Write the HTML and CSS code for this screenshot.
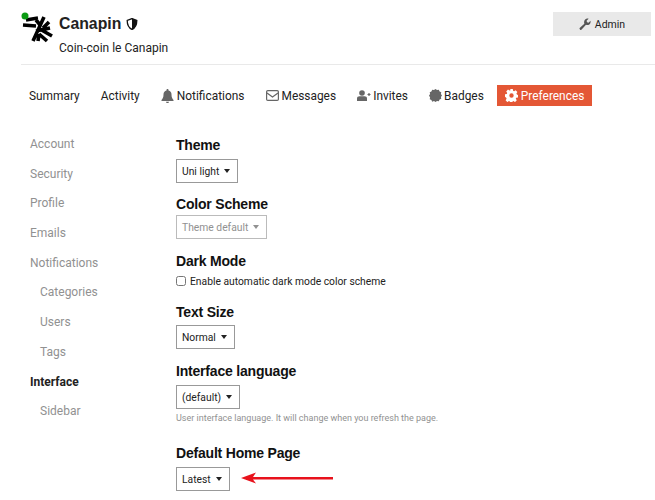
FILE: index.html
```html
<!DOCTYPE html>
<html lang="en">
<head>
<meta charset="utf-8">
<title>Canapin - Preferences</title>
<link rel="stylesheet" href="styles.css">
</head>
<body>
<div class="page">
  <header class="head">
    <div class="avatar">
      <svg width="34" height="34" viewBox="0 0 34 34"><g fill="none" stroke="#000" stroke-width="3.600"><path d="M5 7l12-2M2 12l13 1M23 4L12 28M15 7l5 6M15 18l14-3M17 15l14 8M18 21l8 7M18 21l-1 7M28 9l-6 6"/></g><circle cx="4" cy="3" r="3.500" fill="#0a9a12"/></svg>
    </div>
    <div class="identity">
      <h1 class="name">Canapin <svg class="shield" width="12" height="12" viewBox="0 0 12 13"><path d="M6 .6l5.2 2c0 4.600-1.600 8-5.200 9.800C2.400 10.600.8 7.200.8 2.600z" fill="none" stroke="#111" stroke-width="1.400"/><path d="M6 .6l5.200 2c0 4.600-1.600 8-5.200 9.800z" fill="#111"/></svg></h1>
      <p class="tagline">Coin-coin le Canapin</p>
    </div>
    <div class="admin"><svg width="12" height="12" viewBox="0 0 13 13"><path d="M1 12.200l-.6-1 5.400-5C5 4 5.800 1.500 8 .8c1-.3 1.800-.2 2.400 0L8.200 3l.5 1.600 1.600.5 2.200-2.200c.4 2.200-.6 4-2.400 4.600-1 .3-1.800.2-2.500-.1l-5 5.200c-.4.300-1.200.400-1.600.2z" fill="#555"/></svg>Admin</div>
  </header>
  <nav class="tabs">
    <a class="tab">Summary</a>
    <a class="tab">Activity</a>
    <a class="tab"><svg width="13" height="14" viewBox="0 0 13 14"><path d="M6.500 0c.6 0 1 .4 1 1v.5c2 .4 3 2 3 4 0 3 .8 4 2 5.500v1H.5v-1c1.200-1.500 2-2.500 2-5.500 0-2 1-3.600 3-4V1c0-.6.400-1 1-1zM5 12.800h3c0 .8-.6 1.200-1.500 1.200S5 13.600 5 12.800z" fill="#666"/></svg>Notifications</a>
    <a class="tab"><svg width="13" height="11" viewBox="0 0 13 11"><rect x=".6" y=".6" width="11.800" height="9.800" rx="1.200" fill="none" stroke="#666" stroke-width="1.200"/><path d="M1 3l5.500 4L12 3" fill="none" stroke="#666" stroke-width="1.200"/></svg>Messages</a>
    <a class="tab tight"><svg width="14" height="11" viewBox="0 0 14 11"><circle cx="5" cy="3" r="2.800" fill="#666"/><path d="M0 11V8.500C0 7 1 6.200 2.500 6.200h5C9 6.200 10 7 10 8.500V11z" fill="#666"/><path d="M10.500 4.500h3M12 3v3" stroke="#666" stroke-width="1.200"/></svg>Invites</a>
    <a class="tab tight"><svg width="13" height="13" viewBox="0 0 13 13"><path d="M6.500 0l1.500 1.100 1.800-.4.800 1.700 1.700.8-.4 1.800L13 6.500l-1.100 1.500.4 1.800-1.700.8-.8 1.700L8 12l-1.500 1L5 12l-1.800.8-.8-1.700-1.700-.8.400-1.800L0 6.500 1.100 5 .7 3.200l1.700-.8.8-1.700L5 1.100z" fill="#666"/></svg>Badges</a>
    <a class="tab active"><svg width="13" height="13" viewBox="0 0 13 13"><path fill-rule="evenodd" d="M5.200 0h2.600l.3 1.800 1 .5 1.500-1 1.800 1.800-1 1.500.5 1 1.100.3v2.600l-1.800.3-.4 1 1 1.500-1.800 1.800-1.500-1-1 .4-.3 1.800H5.200l-.3-1.800-1-.4-1.500 1-1.800-1.800 1-1.500-.4-1L0 7.800V5.200l1.800-.3.400-1-1-1.500L3 .6l1.500 1 1-.4zM6.500 4.300a2.200 2.200 0 1 0 0 4.400 2.200 2.200 0 0 0 0-4.400z" fill="#fff"/></svg>Preferences</a>
  </nav>
  <div class="body">
    <aside class="side">
      <a class="side-link">Account</a>
      <a class="side-link">Security</a>
      <a class="side-link">Profile</a>
      <a class="side-link">Emails</a>
      <a class="side-link">Notifications</a>
      <a class="side-link sub">Categories</a>
      <a class="side-link sub">Users</a>
      <a class="side-link sub">Tags</a>
      <a class="side-link current">Interface</a>
      <a class="side-link sub">Sidebar</a>
    </aside>
    <main class="prefs">
      <section class="pref theme">
        <h2>Theme</h2>
        <div class="select">Uni light<i class="caret"></i></div>
      </section>
      <section class="pref scheme">
        <h2>Color Scheme</h2>
        <div class="select disabled">Theme default<i class="caret"></i></div>
      </section>
      <section class="pref dark">
        <h2>Dark Mode</h2>
        <label class="check"><input type="checkbox">Enable automatic dark mode color scheme</label>
      </section>
      <section class="pref size">
        <h2>Text Size</h2>
        <div class="select">Normal<i class="caret"></i></div>
      </section>
      <section class="pref lang">
        <h2>Interface language</h2>
        <div class="select">(default)<i class="caret"></i></div>
        <p class="hint">User interface language. It will change when you refresh the page.</p>
      </section>
      <section class="pref home">
        <h2>Default Home Page</h2>
        <div class="select-row">
          <div class="select">Latest<i class="caret"></i></div>
          <svg class="arrow" width="92" height="14" viewBox="0 0 92 14"><path d="M0 7L15 1.500 12 6H92V8.500H12l3 4z" fill="#e8121c"/></svg>
        </div>
      </section>
    </main>
  </div>
</div>
</body>
</html>
```
FILE: styles.css
```css
* { box-sizing: border-box; }
html, body { margin: 0; height: 500px; overflow: hidden; background: #fff; }
body { font-family: Roboto, "Liberation Sans", sans-serif; color: #222; font-size: 12px; }
.page { padding: 0 4px 0 21px; }
.head { display: flex; align-items: flex-start; height: 65px; padding-top: 12px; padding-right: 4px; border-bottom: 1px solid #e9e9e9; margin-right: -4px; }
.avatar { width: 38px; height: 36px; flex: none; margin-top: 1px; }
.avatar svg { overflow: visible; }
.identity { flex: 1; padding-top: 1px; }
.name { margin: 0; font-family: "Liberation Sans", sans-serif; font-size: 15.800px; line-height: 22px; font-weight: 700; }
.shield { vertical-align: -1px; }
.tagline { margin: 6px 0 0; font-size: 12px; line-height: 15px; }
.admin { width: 98px; height: 24px; background: #e9e9e9; display: flex; align-items: center; justify-content: center; gap: 4px; font-size: 10.500px; color: #222; }
.tabs { display: flex; height: 21px; margin-top: 20px; align-items: center; }
.tab { height: 21px; padding: 0 8px; margin-right: 5.100px; display: flex; align-items: center; gap: 3px; font-size: 11.900px; color: #222; white-space: nowrap; }
.tab.tight { gap: 2px; }
.tab.active { background: #e45735; color: #fff; margin-right: 0; }
.body { display: flex; margin-top: 24px; }
.side { width: 155px; flex: none; display: flex; flex-direction: column; }
.side-link { height: 29.700px; line-height: 29.700px; padding-left: 9px; color: #919191; font-size: 12px; }
.side-link.sub { padding-left: 19px; }
.side-link.current { color: #222; font-weight: 700; }
.prefs { flex: 1; padding-top: 7px; }
.pref { display: block; }
.pref h2 { margin: 0 0 2px; font-family: "Liberation Sans", sans-serif; font-size: 14px; letter-spacing: -.2px; line-height: 16px; font-weight: 700; color: #111; }
.select { display: inline-flex; align-items: center; height: 24px; padding: 0 7px 0 5px; border: 1px solid #999; font-size: 10.300px; color: #222; gap: 5px; margin-top: 4px; vertical-align: top; }
.select.disabled { color: #919191; border-color: #bbb; }
.caret { width: 0; height: 0; border: 3.500px solid transparent; border-top: 4px solid #222; border-bottom: 0; }
.select.disabled .caret { border-top-color: #919191; }
.scheme { margin-top: 13px; }
.scheme .select { margin-top: 1px; }
.dark { margin-top: 14px; }
.check { display: flex; align-items: center; gap: 4px; font-size: 10.300px; color: #222; margin-top: 4px; height: 16px; }
.check input { width: 10px; height: 10px; margin: 0; }
.size { margin-top: 15px; }
.size .select { margin-top: 3px; }
.lang { margin-top: 14px; }
.hint { margin: 3px 0 0; font-size: 9px; line-height: 12px; color: #919191; }
.home { margin-top: 21px; }
.select-row { display: flex; align-items: flex-start; }
.arrow { margin: 8px 0 0 11px; }
```
